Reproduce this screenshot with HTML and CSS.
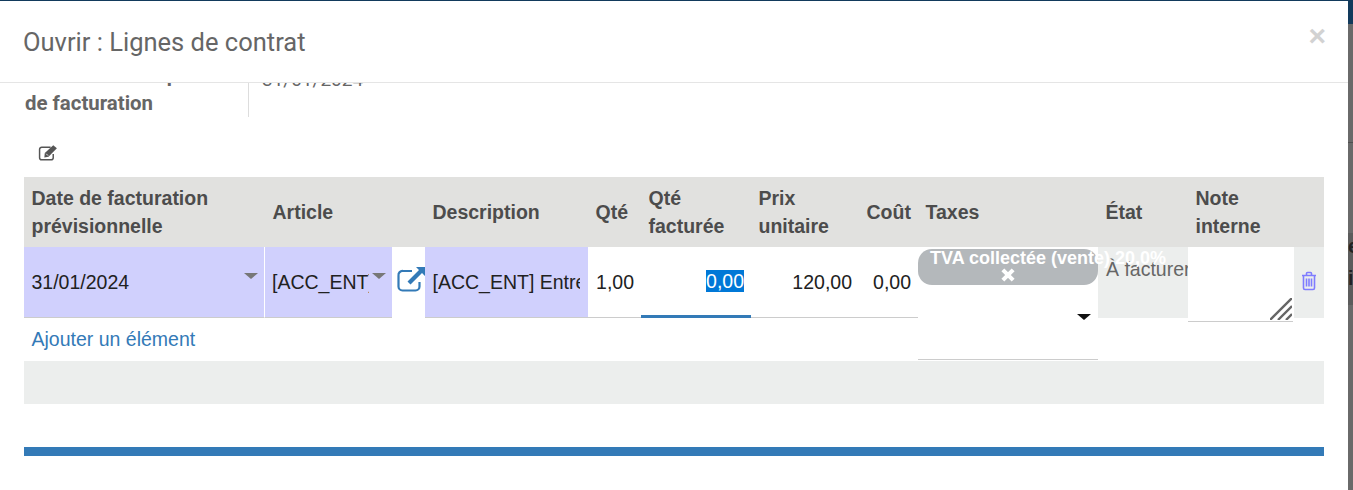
FILE: index.html
```html
<!DOCTYPE html>
<html lang="fr">
  <head>
    <meta charset="UTF-8" />
    <title>Ouvrir : Lignes de contrat</title>
    <link rel="stylesheet" href="styles.css">
  </head>
  <body>
    <div class="modal">
      <header class="modal-header">
        <h4>Ouvrir : Lignes de contrat</h4>
        <span class="close">×</span>
      </header>
      <div class="modal-body">
        <div class="form-row">
          <div class="form-label">Dates de fin de période<br>de facturation</div>
          <div class="form-value">31/01/2024</div>
        </div>
        <div class="toolbar">
          <svg class="edit-icon" viewBox="0 0 20 16" width="21" height="17">
            <path d="M12 3H3.500A2 2 0 0 0 1.500 5v8a2 2 0 0 0 2 2h9a2 2 0 0 0 2-2V9.500" fill="none" stroke="#555" stroke-width="1.400"/>
            <path d="M6.500 8.500 14.500 1l3.500 3-8 8-4 .8z" fill="#555"/>
            <path d="M7.800 9.200 9.600 11" stroke="#fff" stroke-width=".8"/>
          </svg>
        </div>
        <table class="lines">
          <colgroup>
            <col class="c-date"><col class="c-article"><col class="c-desc"><col class="c-qty"><col class="c-inv"><col class="c-price"><col class="c-cost"><col class="c-tax"><col class="c-state"><col class="c-note"><col class="c-del">
          </colgroup>
          <thead>
            <tr>
              <th>Date de facturation prévisionnelle</th>
              <th>Article</th>
              <th>Description</th>
              <th>Qté</th>
              <th>Qté facturée</th>
              <th>Prix unitaire</th>
              <th>Coût</th>
              <th>Taxes</th>
              <th>État</th>
              <th>Note interne</th>
              <th></th>
            </tr>
          </thead>
          <tbody>
            <tr class="line">
              <td>
                <div class="field required date-field">31/01/2024<span class="caret"></span></div>
              </td>
              <td>
                <div class="article">
                  <div class="field required article-field"><span class="clip">[ACC_ENT] Entretien</span><span class="caret"></span></div>
                  <svg class="link-icon" viewBox="0 0 28 25" width="28" height="25">
                    <path d="M15 4H6A4 4 0 0 0 1.500 8.500v11a4 4 0 0 0 4 4h13a4 4 0 0 0 4-4V15" fill="none" stroke="#337ab7" stroke-width="2.200"/>
                    <path d="M19 0h9v9l-3-3L13.500 17.500 10.500 14.500 22 3z" fill="#337ab7"/>
                  </svg>
                </div>
              </td>
              <td>
                <div class="field required desc-field"><span class="clip">[ACC_ENT] Entretien</span></div>
              </td>
              <td><div class="field num">1,00</div></td>
              <td><div class="field num focused"><span class="selected">0,00</span></div></td>
              <td><div class="field num">120,00</div></td>
              <td><div class="field num">0,00</div></td>
              <td>
                <div class="tax-field">
                  <div class="tag">
                    <span class="tag-label">TVA collectée (vente) 20,0%</span>
                    <svg class="tag-x" viewBox="0 0 14 14" width="16" height="16">
                      <path d="M2.500 2.500 11.500 11.500M11.500 2.500 2.500 11.500" stroke="#fff" stroke-width="3.600"/>
                    </svg>
                  </div>
                  <span class="tax-caret"></span>
                </div>
              </td>
              <td class="state">À facturer</td>
              <td>
                <div class="note">
                  <svg class="resizer" viewBox="0 0 22 22" width="22" height="22">
                    <path d="M0 22 22 0M8 22 22 8M16 22 22 16" stroke="#666" stroke-width="2.400"/>
                  </svg>
                </div>
              </td>
              <td class="del">
                <svg viewBox="0 0 16 20" width="16" height="20">
                  <path d="M1 4.500h14M5.500 4.500V2.500q0-1 1-1h3q1 0 1 1v2M2.500 4.500v12.500q0 1.500 1.500 1.500h8q1.500 0 1.500-1.500V4.500M5.500 7.500v8M8 7.500v8M10.500 7.500v8" fill="none" stroke="#7f7cff" stroke-width="1.600"/>
                </svg>
              </td>
            </tr>
            <tr class="add-row">
              <td colspan="11"><a class="add-link">Ajouter un élément</a></td>
            </tr>
          </tbody>
          <tfoot>
            <tr><td colspan="11"></td></tr>
          </tfoot>
        </table>
        <div class="bottom-bar"></div>
      </div>
    </div>
    <aside class="backdrop">
      <span>e</span>
      <span>i</span>
    </aside>
  </body>
</html>
```

FILE: styles.css
```css
* {
  box-sizing: border-box;
}
html, body {
  height: 490px;
  overflow: hidden;
}
body {
  margin: 0;
  display: flex;
  font-family: "Liberation Sans", Arial, sans-serif;
  font-size: 19.5px;
  line-height: 28px;
  color: #212121;
  background: linear-gradient(#123a5c 0, #123a5c 24px, #6a6a6a 24px, #6a6a6a 142px, #4f4f4f 142px, #4f4f4f 143px, #6a6a6a 143px, #6a6a6a 233px, #5c5c5c 233px, #5c5c5c 305px, #6a6a6a 305px);
}
.modal {
  width: 1348px;
  margin-top: 1px;
  background: #fff;
  flex: none;
}
.modal-header {
  height: 82px;
  display: flex;
  align-items: center;
  justify-content: space-between;
  padding: 0 22px 0 23px;
  border-bottom: 1px solid #e5e5e5;
}
.modal-header h4 {
  margin: 0;
  font-family: Roboto, sans-serif;
  font-size: 25.5px;
  font-weight: 400;
  color: #666;
}
.close {
  font-size: 30px;
  font-weight: bold;
  color: #d2d2d2;
  margin-top: -12px;
}
.modal-body {
  height: 407px;
  overflow: hidden;
  padding: 0 24px;
}
.form-row {
  display: flex;
  margin-top: -22px;
  height: 56px;
  font-family: Roboto, sans-serif;
  color: #666;
}
.form-label {
  width: 225px;
  font-size: 20.4px;
  font-weight: bold;
  padding-left: 1px;
  border-right: 1px solid #ddd;
}
.form-value {
  padding: 5px 0 0 13px;
  font-size: 19px;
}
.toolbar {
  height: 60px;
  padding: 27px 0 0 14px;
}
.edit-icon {
  display: block;
}
.lines {
  width: 1300px;
  table-layout: fixed;
  border-collapse: collapse;
}
.c-date { width: 241px; }
.c-article { width: 160px; }
.c-desc { width: 163px; }
.c-qty { width: 53px; }
.c-inv { width: 110px; }
.c-price { width: 108px; }
.c-cost { width: 59px; }
.c-tax { width: 180px; }
.c-state { width: 90px; }
.c-note { width: 106px; }
.c-del { width: 30px; }
.lines th {
  height: 70px;
  padding: 0 8px 0 7.5px;
  background: #e1e1df;
  color: #4c4c4c;
  text-align: left;
  vertical-align: middle;
  font-weight: bold;
}
.lines td {
  padding: 0;
}
.line td {
  height: 71px;
  vertical-align: top;
}
.field {
  position: relative;
  height: 71px;
  padding: 0 8px 0 7.5px;
  display: flex;
  align-items: center;
  border-bottom: 1px solid #ccc;
  overflow: hidden;
}
.required {
  background: #d0d0fd;
}
.date-field {
  border-right: 1px solid #fff;
}
.article {
  display: flex;
}
.article-field {
  width: 127px;
  flex: none;
  padding-left: 7px;
}
.link-icon {
  margin: 20px 0 0 5px;
  flex: none;
}
.clip {
  display: block;
  overflow: hidden;
  white-space: nowrap;
}
.article-field .clip {
  width: 97px;
}
.desc-field .clip {
  width: 149px;
}
.caret {
  position: absolute;
  right: 6px;
  top: 26px;
  border-left: 7px solid transparent;
  border-right: 7px solid transparent;
  border-top: 6px solid #777;
}
.num {
  justify-content: flex-end;
  padding-right: 7px;
}
.focused {
  border-bottom: 3px solid #337ab7;
}
.selected {
  background: #0078d7;
  color: #fff;
  line-height: 22px;
}
.tax-field {
  position: relative;
  z-index: 1;
  height: 113px;
  margin-bottom: -42px;
  padding-top: 2px;
  border-bottom: 1px solid #ccc;
}
.tag {
  height: 36px;
  border-radius: 14px;
  background: #b4b8bb;
  color: #fff;
  padding: 0 12px;
  font-size: 18px;
  font-weight: bold;
  line-height: 18px;
}
.tag-label {
  display: block;
  white-space: nowrap;
}
.tag-x {
  display: block;
  margin: 0 auto;
}
.tax-caret {
  position: absolute;
  right: 7px;
  top: 67px;
  border-left: 7px solid transparent;
  border-right: 7px solid transparent;
  border-top: 6px solid #111;
}
.lines .state {
  height: 71px;
  padding: 8px 0 0 8px;
  background: #eceeed;
  color: #666;
  overflow: hidden;
  white-space: nowrap;
}
.note {
  position: relative;
  height: 75px;
  margin-bottom: -4px;
  margin-right: 1px;
  border-bottom: 1px solid #ccc;
}
.resizer {
  position: absolute;
  right: 1px;
  bottom: 1px;
}
.lines .del {
  background: #eceeed;
  text-align: center;
  vertical-align: middle;
  padding-top: 3px;
}
.del svg {
  display: inline-block;
}
.lines .add-row td {
  height: 43px;
  padding: 0 0 2px 7.500px;
  vertical-align: middle;
}
.add-link {
  color: #337ab7;
}
.lines tfoot td {
  height: 43px;
  background: #eceeed;
}
.bottom-bar {
  height: 9px;
  margin-top: 43px;
  background: #337ab7;
}
.backdrop {
  flex: 1;
  display: flex;
  flex-direction: column;
  overflow: hidden;
  padding-top: 232px;
  color: #222;
  font-weight: bold;
}
.backdrop span {
  height: 32px;
}
```
